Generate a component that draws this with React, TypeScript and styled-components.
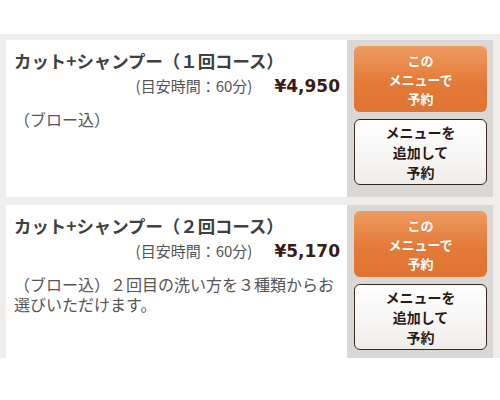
import React from 'react';
import styled, { createGlobalStyle } from 'styled-components';

const GlobalStyle = createGlobalStyle`
  html, body {
    margin: 0;
    padding: 0;
    background: #ffffff;
  }
  body {
    font-family: "Noto Sans CJK JP", "Noto Sans", sans-serif;
  }
`;

const Page = styled.div`
  width: 500px;
  height: 400px;
  padding-top: 34px;
  box-sizing: border-box;
  background: #ffffff;
`;

const MenuList = styled.div`
  display: flex;
  flex-direction: column;
  gap: 8px;
  padding: 6px 7px 0 6px;
  background: #efeeed;
`;

const MenuCard = styled.div<{ $minHeight: number }>`
  display: flex;
  flex-direction: row;
  min-height: ${(p) => p.$minHeight}px;
`;

const Info = styled.div`
  flex: 1;
  background: #ffffff;
  padding: 9px 6px 0 8px;
  display: flex;
  flex-direction: column;
`;

const Title = styled.div`
  font-size: 17.4px;
  font-weight: 700;
  line-height: 24px;
  color: #404040;
`;

const TimeRow = styled.div`
  display: flex;
  justify-content: flex-end;
  align-items: baseline;
  gap: 22px;
  padding-right: 1px;
  margin-top: 2px;
`;

const Duration = styled.span`
  font-size: 15px;
  color: #555555;
`;

const Price = styled.span`
  font-family: "DejaVu Sans", sans-serif;
  font-size: 17px;
  font-weight: 700;
  color: #3a1d12;
`;

const Description = styled.p`
  margin: 13px 0 0;
  width: 321px;
  font-size: 16px;
  line-height: 20px;
  color: #555555;
`;

const Actions = styled.div`
  width: 146px;
  box-sizing: border-box;
  background: #dbd7d4;
  padding: 6px 6px 6px 7px;
  display: flex;
  flex-direction: column;
  gap: 7px;
`;

const ReserveButton = styled.button`
  height: 66px;
  border: none;
  border-radius: 6px;
  background: linear-gradient(#ee9c60, #e37a38 55%, #e07432);
  color: #ffffff;
  font-family: "Noto Sans CJK JP", sans-serif;
  font-size: 13px;
  font-weight: 700;
  line-height: 19px;
  text-align: center;
  padding: 0;
  cursor: pointer;
`;

const AddButton = styled.button`
  height: 66px;
  box-sizing: border-box;
  border: 1.5px solid #3b2a24;
  border-radius: 6px;
  background: linear-gradient(#ffffff, #f6f5f4 60%, #efedeb);
  color: #2b1a14;
  font-family: "Noto Sans CJK JP", sans-serif;
  font-size: 14px;
  font-weight: 700;
  line-height: 20px;
  text-align: center;
  padding: 0;
  cursor: pointer;
`;

type Menu = {
  title: string;
  duration: string;
  price: string;
  description: string;
  minHeight: number;
};

const menus: Menu[] = [
  {
    title: 'カット+シャンプー（１回コース）',
    duration: '(目安時間：60分)',
    price: '¥4,950',
    description: '（ブロー込）',
    minHeight: 157,
  },
  {
    title: 'カット+シャンプー（２回コース）',
    duration: '(目安時間：60分)',
    price: '¥5,170',
    description: '（ブロー込）２回目の洗い方を３種類からお選びいただけます。',
    minHeight: 153,
  },
];

export default function App() {
  return (
    <Page>
      <GlobalStyle />
      <MenuList>
        {menus.map((m) => (
          <MenuCard key={m.title} $minHeight={m.minHeight}>
            <Info>
              <Title>{m.title}</Title>
              <TimeRow>
                <Duration>{m.duration}</Duration>
                <Price>{m.price}</Price>
              </TimeRow>
              <Description>{m.description}</Description>
            </Info>
            <Actions>
              <ReserveButton>
                この
                <br />
                メニューで
                <br />
                予約
              </ReserveButton>
              <AddButton>
                メニューを
                <br />
                追加して
                <br />
                予約
              </AddButton>
            </Actions>
          </MenuCard>
        ))}
      </MenuList>
    </Page>
  );
}
